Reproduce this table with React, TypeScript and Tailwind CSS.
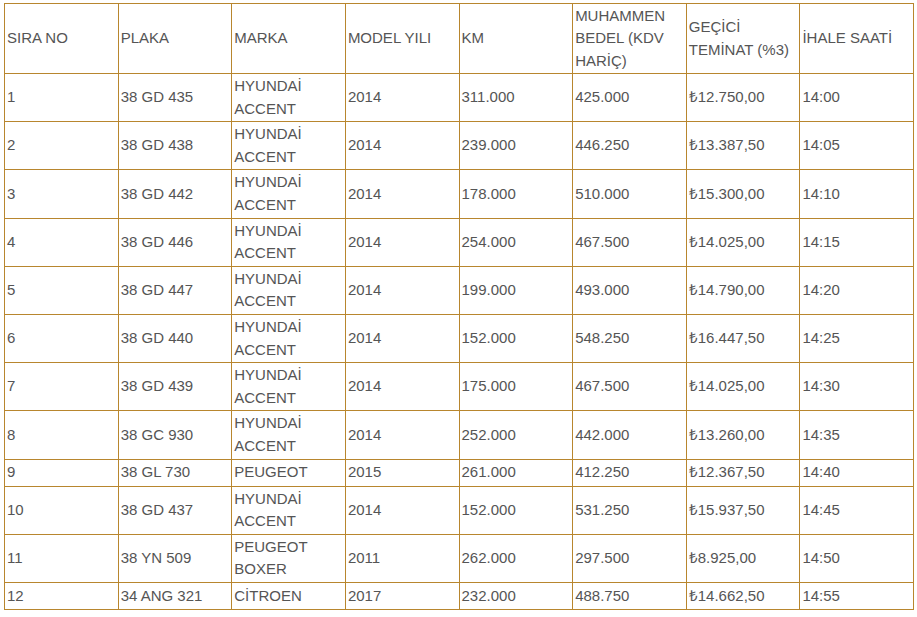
const headers = [
  'SIRA NO',
  'PLAKA',
  'MARKA',
  'MODEL YILI',
  'KM',
  'MUHAMMEN BEDEL (KDV HARİÇ)',
  'GEÇİCİ TEMİNAT (%3)',
  'İHALE SAATİ',
];

const rows: string[][] = [
  ['1', '38 GD 435', 'HYUNDAİ ACCENT', '2014', '311.000', '425.000', '₺12.750,00', '14:00'],
  ['2', '38 GD 438', 'HYUNDAİ ACCENT', '2014', '239.000', '446.250', '₺13.387,50', '14:05'],
  ['3', '38 GD 442', 'HYUNDAİ ACCENT', '2014', '178.000', '510.000', '₺15.300,00', '14:10'],
  ['4', '38 GD 446', 'HYUNDAİ ACCENT', '2014', '254.000', '467.500', '₺14.025,00', '14:15'],
  ['5', '38 GD 447', 'HYUNDAİ ACCENT', '2014', '199.000', '493.000', '₺14.790,00', '14:20'],
  ['6', '38 GD 440', 'HYUNDAİ ACCENT', '2014', '152.000', '548.250', '₺16.447,50', '14:25'],
  ['7', '38 GD 439', 'HYUNDAİ ACCENT', '2014', '175.000', '467.500', '₺14.025,00', '14:30'],
  ['8', '38 GC 930', 'HYUNDAİ ACCENT', '2014', '252.000', '442.000', '₺13.260,00', '14:35'],
  ['9', '38 GL 730', 'PEUGEOT', '2015', '261.000', '412.250', '₺12.367,50', '14:40'],
  ['10', '38 GD 437', 'HYUNDAİ ACCENT', '2014', '152.000', '531.250', '₺15.937,50', '14:45'],
  ['11', '38 YN 509', 'PEUGEOT BOXER', '2011', '262.000', '297.500', '₺8.925,00', '14:50'],
  ['12', '34 ANG 321', 'CİTROEN', '2017', '232.000', '488.750', '₺14.662,50', '14:55'],
];

export default function App() {
  return (
    <div className="min-h-screen bg-white pt-[3px] pl-[4px] font-['Liberation_Sans',Arial,sans-serif] text-[15px] leading-[22.6px] text-[#555555]">
      <table className="w-[910px] table-fixed border-collapse">
        <thead>
          <tr className="h-[70px]">
            {headers.map((h) => (
              <td key={h} className="border border-[#b8862e] px-[2px] py-0 align-middle font-normal">
                {h}
              </td>
            ))}
          </tr>
        </thead>
        <tbody>
          {rows.map((row) => (
            <tr key={row[0]} className="h-[27px]">
              {row.map((cell, i) => (
                <td key={i} className="border border-[#b8862e] px-[2px] py-px align-middle">
                  {cell}
                </td>
              ))}
            </tr>
          ))}
        </tbody>
      </table>
    </div>
  );
}
